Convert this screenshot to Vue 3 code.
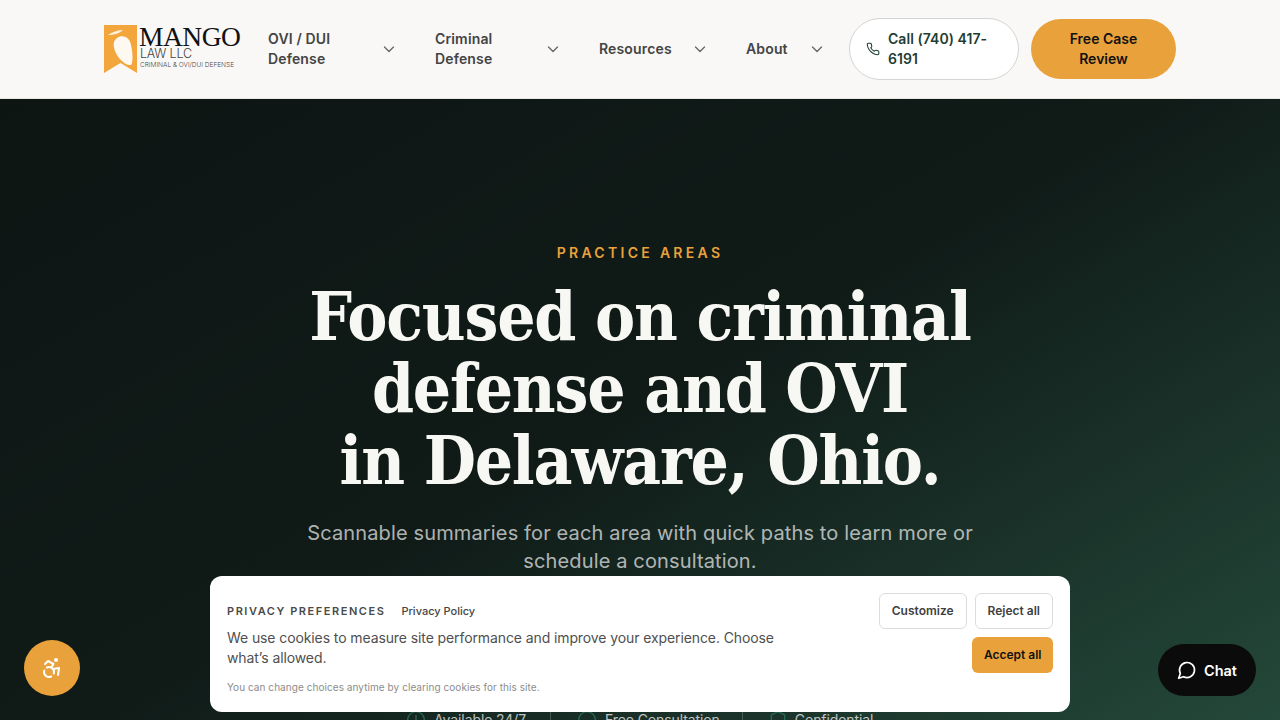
<script setup>
const nav = [
  { label: 'OVI / DUI Defense', cls: 'w1' },
  { label: 'Criminal Defense', cls: 'w2' },
  { label: 'Resources', cls: 'w3' },
  { label: 'About', cls: 'w4' },
]
</script>

<template>
  <div class="page">
    <header class="header">
      <a class="logo" aria-label="Mango Law LLC">
        <svg class="ribbon" viewBox="0 0 33 48" width="33" height="48">
          <path d="M0 0H33V48L16.5 38 0 48Z" fill="#f2a63c" />
          <path d="M13 13C18 9 26 12 27 20 29 28 29 38 27 40 22 41 14 34 11 26 9 20 9 16 13 13Z" fill="#fdf8f0" />
          <path d="M4 10C8 7 14 5 19 5 16 8 10 10 4 10Z" fill="#fdf3e2" />
        </svg>
        <div class="wordmark">
          <span class="w-mango">MANGO</span>
          <span class="w-law">LAW LLC</span>
          <span class="w-tag">CRIMINAL &amp; OVI/DUI DEFENSE</span>
        </div>
      </a>
      <nav class="nav">
        <a v-for="item in nav" :key="item.label" class="nav-item" :class="item.cls">
          <span>{{ item.label }}</span>
          <svg class="chev" viewBox="0 0 16 16" width="16" height="16" fill="none" stroke="currentColor" stroke-width="1.3" stroke-linecap="round" stroke-linejoin="round"><path d="m3.5 6 4.5 4.5L12.500 6" /></svg>
        </a>
      </nav>
      <a class="call">
        <svg viewBox="0 0 24 24" width="14" height="14" fill="none" stroke="currentColor" stroke-width="1.8" stroke-linecap="round" stroke-linejoin="round"><path d="M22 16.92v3a2 2 0 0 1-2.18 2 19.79 19.79 0 0 1-8.63-3.07 19.5 19.5 0 0 1-6-6 19.79 19.79 0 0 1-3.07-8.67A2 2 0 0 1 4.11 2h3a2 2 0 0 1 2 1.72 12.84 12.84 0 0 0 .7 2.81 2 2 0 0 1-.45 2.11L8.09 9.91a16 16 0 0 0 6 6l1.27-1.27a2 2 0 0 1 2.11-.45 12.84 12.84 0 0 0 2.81.7A2 2 0 0 1 22 16.92z" /></svg>
        <span>Call (740) 417-6191</span>
      </a>
      <a class="cta">Free Case Review</a>
    </header>

    <main class="hero">
      <p class="eyebrow">PRACTICE AREAS</p>
      <h1 class="title">Focused on criminal defense and OVI<br />in Delaware, Ohio.</h1>
      <p class="sub">Scannable summaries for each area with quick paths to learn more or schedule a consultation.</p>
      <ul class="badges">
        <li>
          <svg viewBox="0 0 24 24" width="20" height="20" fill="none" stroke="#256a56" stroke-width="1.6"><circle cx="12" cy="12" r="10" /><path d="M12 6v6l4 2" /></svg>
          Available 24/7
        </li>
        <li>
          <svg viewBox="0 0 24 24" width="20" height="20" fill="none" stroke="#256a56" stroke-width="1.6"><circle cx="12" cy="12" r="10" /></svg>
          Free Consultation
        </li>
        <li>
          <svg viewBox="0 0 24 24" width="20" height="20" fill="none" stroke="#256a56" stroke-width="1.6"><path d="M12 2 20 6v7c0 5-4 8-8 9-4-1-8-4-8-9V6Z" /></svg>
          Confidential
        </li>
      </ul>
    </main>

    <button class="a11y" aria-label="Accessibility">
      <svg viewBox="0 0 24 24" width="24" height="24" fill="none" stroke="#fff" stroke-width="2" stroke-linecap="round" stroke-linejoin="round"><circle cx="16" cy="4" r="1" /><path d="m18 19 1-7-6 1" /><path d="m5 8 3-3 5.5 3-2.36 3.5" /><path d="M4.24 14.5a5 5 0 0 0 6.88 6" /><path d="M13.76 17.5a5 5 0 0 0-6.88-6" /></svg>
    </button>

    <button class="chat">
      <svg viewBox="0 0 24 24" width="20" height="20" fill="none" stroke="#fff" stroke-width="2" stroke-linecap="round" stroke-linejoin="round"><path d="M7.9 20A9 9 0 1 0 4 16.1L2 22Z" /></svg>
      Chat
    </button>

    <section class="cookie">
      <div class="cookie-text">
        <div class="cookie-head">
          <span class="cookie-title">PRIVACY PREFERENCES</span>
          <a class="cookie-link">Privacy Policy</a>
        </div>
        <p class="cookie-body">We use cookies to measure site performance and improve your experience. Choose what’s allowed.</p>
        <p class="cookie-note">You can change choices anytime by clearing cookies for this site.</p>
      </div>
      <div class="cookie-actions">
        <button class="btn">Customize</button>
        <button class="btn">Reject all</button>
        <button class="btn accept">Accept all</button>
      </div>
    </section>
  </div>
</template>

<style>
html, body { margin: 0; overflow: hidden; background: #0f1a17; }
</style>

<style scoped>
.page {
  width: 1280px;
  height: 720px;
  overflow: hidden;
  font-family: Inter, "Liberation Sans", sans-serif;
  display: flex;
  flex-direction: column;
}
.header {
  box-sizing: border-box;
  height: 99px;
  flex: none;
  display: flex;
  align-items: center;
  padding: 0 104px;
  background: #f9f8f6;
  border-bottom: 1px solid #e9e7e3;
}
.logo { display: flex; align-items: flex-start; width: 136px; flex: none; height: 48px; }
.ribbon { flex: none; }
.wordmark { display: flex; flex-direction: column; margin: 1px 0 0 3px; color: #111; white-space: nowrap; }
.w-mango { font-family: "Liberation Serif", serif; font-size: 27.5px; line-height: 22px; letter-spacing: -.5px; margin-left: -1px; }
.w-law { font-size: 12.5px; line-height: 12px; font-weight: 300; color: #444; letter-spacing: -.2px; }
.w-tag { font-size: 6.5px; line-height: 9px; margin-top: 1px; font-weight: 300; color: #444; }

.nav { display: flex; gap: 16px; margin-left: 16px; flex: none; }
.nav-item {
  box-sizing: border-box;
  display: flex;
  align-items: center;
  justify-content: space-between;
  padding: 0 10px 0 12px;
  font-size: 14px;
  letter-spacing: .15px;
  line-height: 20px;
  font-weight: 600;
  color: #444;
}
.w1 { width: 151px; }
.w2 { width: 148px; }
.w3 { width: 131px; }
.w4 { width: 101px; }
.w1 span { width: 90px; }
.w2 span { width: 70px; }
.chev { color: #666; flex: none; }

.call {
  box-sizing: border-box;
  width: 170px;
  height: 62px;
  margin-left: 14px;
  flex: none;
  display: flex;
  align-items: center;
  gap: 8px;
  padding: 0 16px;
  background: #fff;
  border: 1px solid #d4d4d2;
  border-radius: 31px;
  color: #1f3d33;
  font-size: 14px;
  letter-spacing: .05px;
  line-height: 20px;
  font-weight: 600;
}
.call svg { flex: none; }
.cta {
  box-sizing: border-box;
  width: 145px;
  height: 60px;
  margin-left: 12px;
  flex: none;
  display: flex;
  align-items: center;
  justify-content: center;
  text-align: center;
  padding: 0 24px;
  background: #e9a23b;
  border-radius: 30px;
  color: #111;
  font-size: 14px;
  line-height: 20px;
  font-weight: 600;
}

.hero {
  flex: 1;
  display: flex;
  flex-direction: column;
  align-items: center;
  padding-top: 144px;
  background: linear-gradient(150deg, #0d1513 0%, #101b18 50%, #24483a 100%);
  text-align: center;
}
.eyebrow {
  margin: 0;
  font-size: 14px;
  line-height: 20px;
  font-weight: 600;
  letter-spacing: 3.3px;
  color: #e9a23b;
}
.title {
  margin: 18px 0 0;
  width: 800px;
  font-family: "DejaVu Serif", serif;
  font-stretch: condensed;
  font-size: 67px;
  letter-spacing: -1.2px;
  line-height: 72px;
  font-weight: 700;
  color: #f7f7f4;
}
.sub {
  margin: 22px 0 0;
  width: 700px;
  font-size: 20px;
  letter-spacing: .14px;
  line-height: 28px;
  color: rgba(255, 255, 255, .68);
}
.badges {
  list-style: none;
  margin: 0;
  padding: 0;
  position: absolute;
  top: 708px;
  left: 406px;
  display: flex;
  color: rgba(255, 255, 255, .72);
  font-size: 14px;
  letter-spacing: -.1px;
  line-height: 24px;
}
.badges li { display: flex; align-items: center; gap: 8px; padding-right: 24px; margin-right: 26px; border-right: 1px solid rgba(255, 255, 255, .2); height: 24px; }
.badges li:nth-child(2) { padding-right: 22px; margin-right: 25px; }
.badges li:last-child { border: 0; margin: 0; padding: 0; gap: 7px; }

.a11y {
  position: fixed;
  left: 24px;
  top: 640px;
  width: 56px;
  height: 56px;
  border: 0;
  border-radius: 50%;
  background: #e9a23b;
  display: flex;
  align-items: center;
  justify-content: center;
  padding: 0;
}
.chat {
  position: fixed;
  left: 1158px;
  top: 644px;
  width: 98px;
  height: 52px;
  border: 0;
  border-radius: 26px;
  background: #0b0b0b;
  color: #fff;
  font: 600 14.5px Inter, sans-serif;
  display: flex;
  align-items: center;
  justify-content: center;
  gap: 7px;
  padding: 0;
}
.cookie {
  position: fixed;
  left: 210px;
  top: 576px;
  box-sizing: border-box;
  width: 860px;
  height: 136px;
  padding: 17px;
  background: #fff;
  border-radius: 12px;
  display: flex;
  justify-content: space-between;
}
.cookie-text { width: 560px; }
.cookie-head { display: flex; align-items: center; gap: 16px; height: 36px; }
.cookie-title { font-size: 11px; font-weight: 600; letter-spacing: 1.55px; color: #4a4a4a; }
.cookie-link { font-size: 11px; font-weight: 500; color: #444; }
.cookie-body { margin: -1px 0 0; font-size: 14px; letter-spacing: -.1px; line-height: 20px; color: #4f4f4f; }
.cookie-note { margin: 11px 0 0; font-size: 10px; line-height: 16px; color: #8c8c8c; letter-spacing: .06px; }
.cookie-actions {
  width: 180px;
  display: flex;
  flex-wrap: wrap;
  justify-content: flex-end;
  align-content: flex-start;
  gap: 8px;
}
.btn {
  box-sizing: border-box;
  height: 36px;
  padding: 0 12px 1px;
  border: 1px solid #dcdcdc;
  border-radius: 6px;
  background: #fff;
  color: #3f3f3f;
  font: 600 12px Inter, sans-serif;
}
.accept { background: #e9a23b; border: 0; color: #111; padding: 0 11.5px 1px; }
</style>
